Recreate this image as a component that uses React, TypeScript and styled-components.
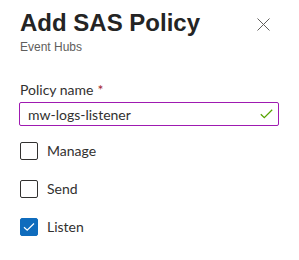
import React from 'react';
import styled, { createGlobalStyle } from 'styled-components';

const Global = createGlobalStyle`
  html, body {
    margin: 0;
    padding: 0;
    background: #ffffff;
  }
`;

const Panel = styled.div`
  width: 299px;
  height: 260px;
  box-sizing: border-box;
  padding: 9px 20px 0 20px;
  background: #ffffff;
  font-family: Lato, 'Liberation Sans', sans-serif;
  color: #323130;
`;

const Header = styled.div`
  display: flex;
  justify-content: space-between;
  align-items: flex-start;
`;

const Title = styled.h1`
  margin: 0;
  font-family: 'Liberation Sans', Arial, sans-serif;
  font-size: 24px;
  font-weight: 700;
  line-height: 28px;
  color: #242424;
`;

const Subtitle = styled.div`
  font-family: 'Liberation Sans', Arial, sans-serif;
  font-size: 12px;
  line-height: 16px;
  color: #605e5c;
  margin-top: 2px;
`;

const CloseButton = styled.button`
  border: none;
  background: none;
  padding: 0;
  margin: 8px 9px 0 0;
  width: 14px;
  height: 14px;
  display: flex;
  align-items: center;
  justify-content: center;
  cursor: pointer;
`;

const Field = styled.div`
  margin-top: 25px;
  display: flex;
  flex-direction: column;
`;

const Label = styled.label`
  font-size: 14px;
  line-height: 20px;
  color: #323130;

  span {
    color: #a4262c;
    margin-left: 4px;
  }
`;

const InputBox = styled.div`
  margin-top: 2px;
  margin-left: -1px;
  width: 260px;
  height: 24px;
  box-sizing: border-box;
  border: 1px solid #9f1ab1;
  border-radius: 2px;
  display: flex;
  align-items: center;
  padding: 0 5px 0 8px;
`;

const Input = styled.input`
  flex: 1;
  border: none;
  outline: none;
  padding: 0;
  font-family: Lato, 'Liberation Sans', sans-serif;
  font-size: 14px;
  color: #323130;
  background: transparent;
`;

const Options = styled.div`
  display: flex;
  flex-direction: column;
  gap: 20px;
  margin-top: 16px;
`;

const Option = styled.label`
  display: flex;
  align-items: center;
  gap: 9px;
  font-size: 14px;
  line-height: 18px;
  color: #323130;
`;

const Box = styled.span<{ $checked?: boolean }>`
  width: 18px;
  height: 18px;
  box-sizing: border-box;
  border-radius: 2px;
  border: 1px solid ${(p) => (p.$checked ? '#0f6cbd' : '#323130')};
  background: ${(p) => (p.$checked ? '#0f6cbd' : '#ffffff')};
  display: flex;
  align-items: center;
  justify-content: center;
`;

const options = [
  { name: 'Manage', checked: false },
  { name: 'Send', checked: false },
  { name: 'Listen', checked: true },
];

export default function App() {
  return (
    <>
      <Global />
      <Panel>
        <Header>
          <div>
            <Title>Add SAS Policy</Title>
            <Subtitle>Event Hubs</Subtitle>
          </div>
          <CloseButton aria-label="Close">
            <svg width="13" height="13" viewBox="0 0 13 13">
              <path d="M0.5 0.5 L12.5 12.5 M12.5 0.5 L0.5 12.5" stroke="#605e5c" strokeWidth="1" fill="none" />
            </svg>
          </CloseButton>
        </Header>
        <Field>
          <Label>
            Policy name<span>*</span>
          </Label>
          <InputBox>
            <Input defaultValue="mw-logs-listener" />
            <svg width="13" height="10" viewBox="0 0 13 10">
              <path d="M0.8 5.2 L4.3 8.6 L12.2 0.8" stroke="#57a300" strokeWidth="1.3" fill="none" />
            </svg>
          </InputBox>
        </Field>
        <Options>
          {options.map((o) => (
            <Option key={o.name}>
              <Box $checked={o.checked}>
                {o.checked && (
                  <svg width="12" height="10" viewBox="0 0 12 10">
                    <path d="M1 5.2 L4.2 8.2 L11 1.5" stroke="#ffffff" strokeWidth="1.2" fill="none" />
                  </svg>
                )}
              </Box>
              {o.name}
            </Option>
          ))}
        </Options>
      </Panel>
    </>
  );
}
